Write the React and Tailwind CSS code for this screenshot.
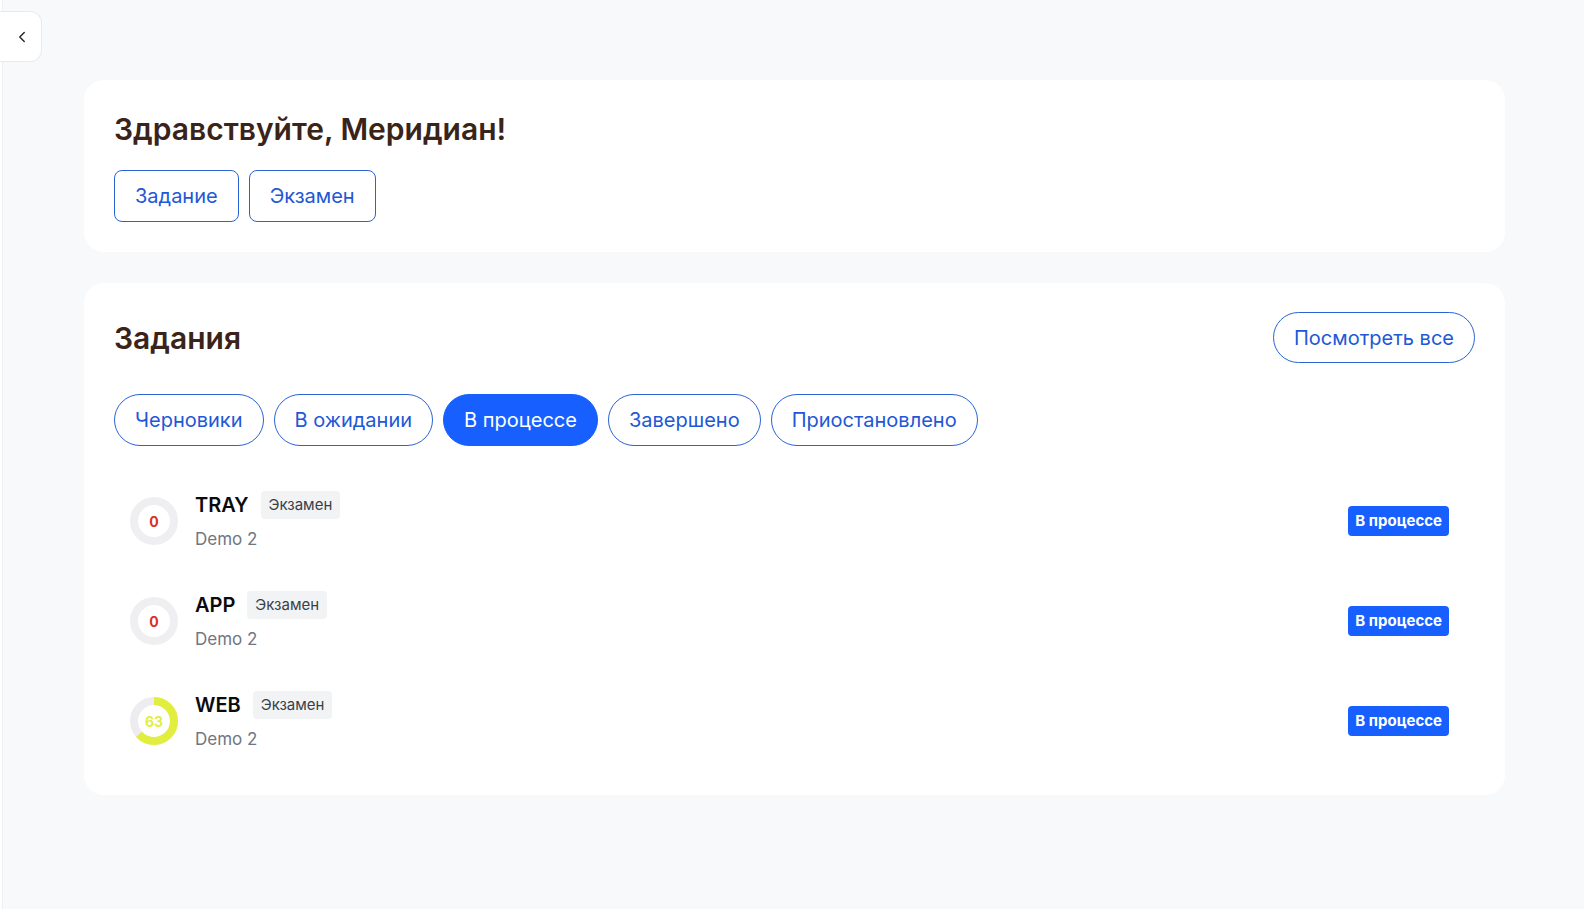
import { ChevronLeft } from 'lucide-react';

const TABS = [
  { label: 'Черновики', active: false },
  { label: 'В ожидании', active: false },
  { label: 'В процессе', active: true },
  { label: 'Завершено', active: false },
  { label: 'Приостановлено', active: false },
];

const TASKS = [
  { id: 'tray', title: 'TRAY', subtitle: 'Demo 2', score: 0 },
  { id: 'app', title: 'APP', subtitle: 'Demo 2', score: 0 },
  { id: 'web', title: 'WEB', subtitle: 'Demo 2', score: 63 },
];

// ─── Score ring ───────────────────────────────────────────────────────────────
function ScoreRing({ score }) {
  const r = 20;
  const c = 2 * Math.PI * r;
  const filled = (score / 100) * c;
  const color = score === 0 ? 'text-[#d6332b]' : 'text-[#e1ee3e]';

  return (
    <div className="relative w-12 h-12 flex-shrink-0">
      <svg width="48" height="48" viewBox="0 0 48 48" className="-rotate-90">
        <circle cx="24" cy="24" r={r} fill="none" stroke={score === 0 ? '#efeff1' : '#ececf1'} strokeWidth="8" />
        {score > 0 && (
          <circle
            cx="24"
            cy="24"
            r={r}
            fill="none"
            stroke="#e1ee3e"
            strokeWidth="8"
            strokeDasharray={`${filled} ${c}`}
          />
        )}
      </svg>
      <div className={`absolute inset-0 flex items-center justify-center text-[14px] font-bold ${color}`}>
        {score}
      </div>
    </div>
  );
}

// ─── Task row ─────────────────────────────────────────────────────────────────
function TaskRow({ task }) {
  return (
    <div className="h-[100px] flex items-center pl-4 pr-[26px]">
      <ScoreRing score={task.score} />
      <div className="ml-[17px] flex-1 min-w-0">
        <div className="flex items-center gap-[12px] h-7">
          <span className="text-[20px] leading-7 font-semibold text-[#0b0b0b]">{task.title}</span>
          <span className="bg-[#f2f3f5] text-[#3a3f47] text-[15px] leading-7 h-7 px-2 rounded">Экзамен</span>
        </div>
        <div className="mt-[8px] text-[17px] leading-6 text-[#707683]">{task.subtitle}</div>
      </div>
      <span className="bg-[#1760ff] text-white text-[15px] font-bold h-[30px] leading-[30px] px-[7px] rounded">
        В процессе
      </span>
    </div>
  );
}

// ─── Main ─────────────────────────────────────────────────────────────────────
export default function App() {
  return (
    <div
      className="min-h-[909px] bg-[#f8f9fb] flex"
      style={{ fontFamily: 'Inter, "Noto Sans", sans-serif' }}
    >
      {/* collapsed sidebar */}
      <div className="w-[3px] bg-white border-r border-[#eceef2] flex-shrink-0" />

      {/* sidebar toggle */}
      <button className="absolute left-0 top-[11px] w-[42px] h-[51px] bg-white border border-l-0 border-[#e8eaee] rounded-r-xl flex items-center justify-center pl-[2px]">
        <ChevronLeft size={18} strokeWidth={1.8} className="text-[#222]" />
      </button>

      <main className="flex-1 pl-[81px] pr-[79px] pt-[80px] flex flex-col gap-[31px]">
        {/* ── Greeting ── */}
        <section className="bg-white rounded-[20px] px-[30px] pt-[30px] pb-[30px]">
          <h1 className="text-[30px] leading-[38px] font-semibold text-[#3a2419]">Здравствуйте, Меридиан!</h1>
          <div className="mt-[22px] flex gap-[10px]">
            <button className="h-[52px] px-5 border border-[#2a63d6] rounded-lg text-[20px] text-[#2158d6]">
              Задание
            </button>
            <button className="h-[52px] px-5 border border-[#2a63d6] rounded-lg text-[20px] text-[#2158d6]">
              Экзамен
            </button>
          </div>
        </section>

        {/* ── Tasks ── */}
        <section className="bg-white rounded-[20px] px-[30px] pt-[29px] pb-[24px]">
          <div className="flex items-center justify-between h-[51px]">
            <h2 className="text-[30px] leading-[38px] font-semibold text-[#3a2419]">Задания</h2>
            <button className="h-[51px] px-5 border border-[#2a63d6] rounded-full text-[20px] text-[#2158d6]">
              Посмотреть все
            </button>
          </div>

          <div className="mt-[31px] flex gap-[10px]">
            {TABS.map(tab => (
              <button
                key={tab.label}
                className={`h-[52px] px-5 rounded-full text-[20px] border ${
                  tab.active
                    ? 'bg-[#1760ff] border-[#1760ff] text-white'
                    : 'bg-white border-[#2a63d6] text-[#2158d6]'
                }`}
              >
                {tab.label}
              </button>
            ))}
          </div>

          <div className="mt-[25px]">
            {TASKS.map(task => (
              <TaskRow key={task.id} task={task} />
            ))}
          </div>
        </section>
      </main>
    </div>
  );
}
